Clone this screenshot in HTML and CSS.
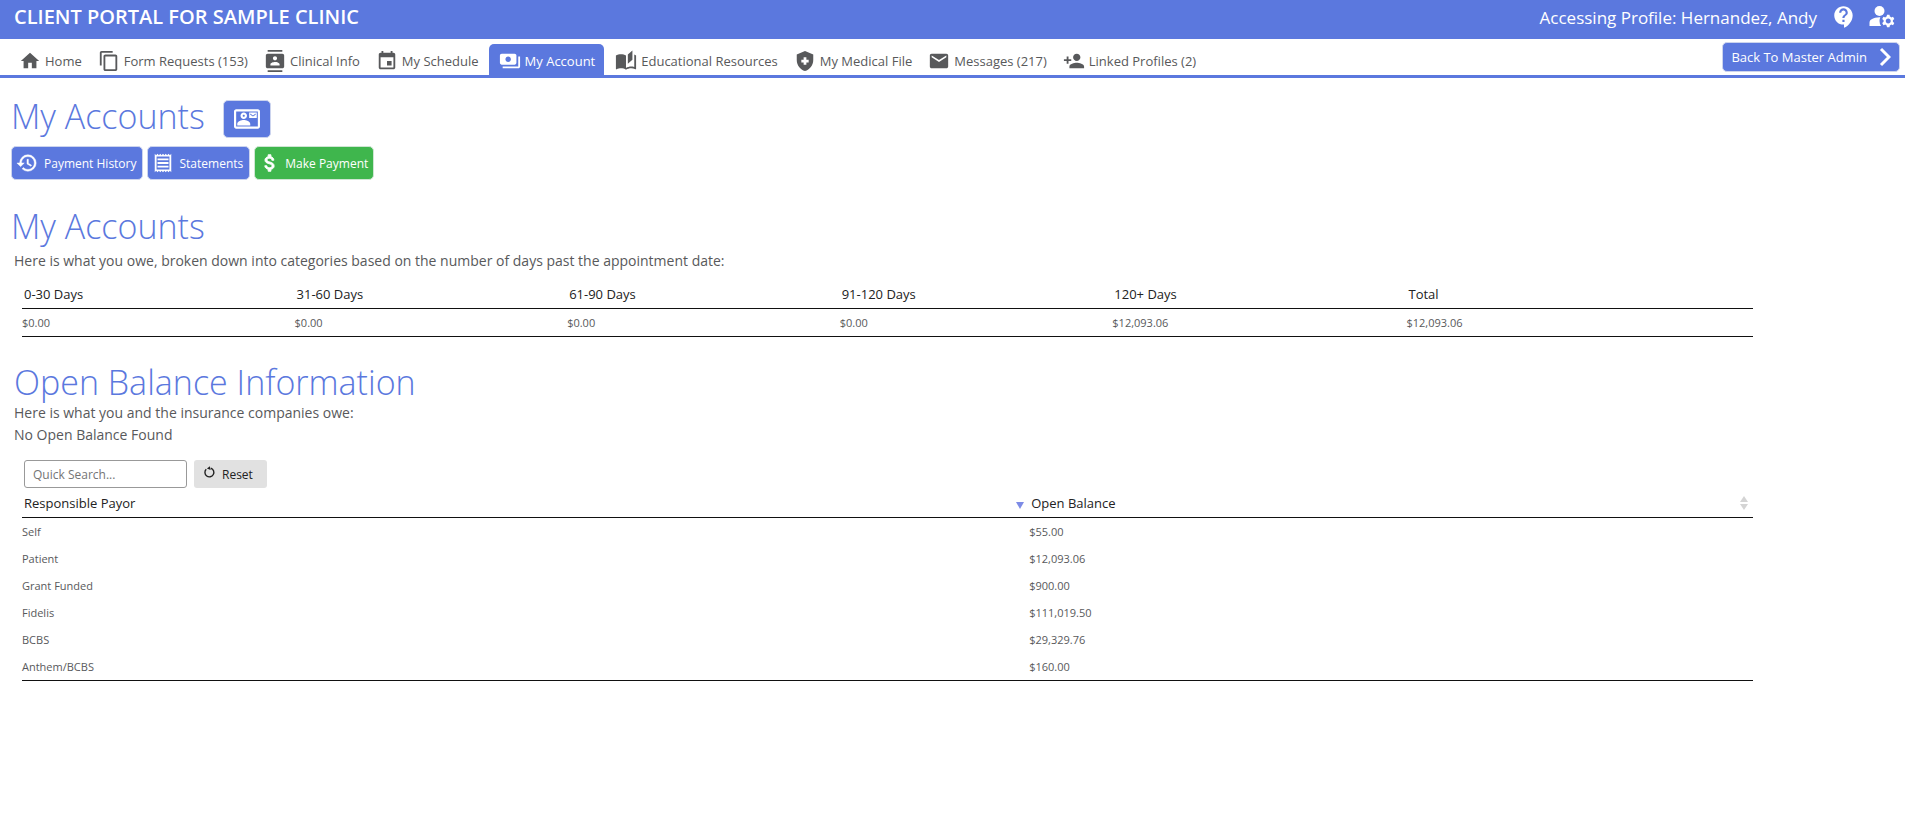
FILE: index.html
```html
<!DOCTYPE html>
<html lang="en">
<head>
<meta charset="utf-8">
<title>Client Portal for Sample Clinic</title>
<link rel="stylesheet" href="styles.css">
</head>
<body>
<header class="topbar">
  <div class="brand">CLIENT PORTAL FOR SAMPLE CLINIC</div>
  <div class="profile">
    <span>Accessing Profile: Hernandez, Andy</span>
    <a href="#help" class="top-icon help" aria-label="Help"><svg viewBox="0 0 24 24"><path d="M11.5 2C6.81 2 3 5.81 3 10.500S6.810 19 11.500 19h.5v3c4.860-2.340 8-7 8-11.500C20 5.810 16.190 2 11.500 2zm1 14.500h-2v-2h2v2zm0-3.500h-2c0-3.250 3-3 3-5 0-1.100-.9-2-2-2s-2 .9-2 2h-2c0-2.210 1.790-4 4-4s4 1.790 4 4c0 2.500-3 2.750-3 5z"/></svg></a>
    <a href="#account" class="top-icon" aria-label="Account settings"><svg viewBox="0 0 24 24"><circle cx="10" cy="8" r="4"/><path d="M10.670 13.020C10.450 13.010 10.230 13 10 13c-2.420 0-4.680.67-6.610 1.820C2.510 15.340 2 16.320 2 17.350V20h9.260A6.960 6.960 0 0 1 10 16c0-1.070.25-2.070.67-2.980zM20.750 16c0-.22-.03-.42-.06-.63l1.140-1.010-1-1.730-1.450.49c-.32-.27-.68-.48-1.080-.63L18 11h-2l-.3 1.490c-.4.150-.76.36-1.080.63l-1.450-.49-1 1.730 1.140 1.010c-.03.210-.06.410-.06.630s.03.420.06.630l-1.140 1.010 1 1.730 1.450-.49c.32.270.68.480 1.080.630L16 21h2l.3-1.490c.4-.15.76-.36 1.080-.63l1.450.49 1-1.730-1.140-1.010c.03-.21.06-.41.060-.63zM17 18c-1.100 0-2-.9-2-2s.9-2 2-2 2 .9 2 2-.9 2-2 2z"/></svg></a>
  </div>
</header>
<nav class="nav">
  <div class="tabs">
    <a class="tab" href="#home"><svg viewBox="0 0 24 24"><path d="M10 20v-6h4v6h5v-8h3L12 3 2 12h3v8z"/></svg>Home</a>
    <a class="tab" href="#forms"><svg viewBox="0 0 24 24"><path d="M16 1H4c-1.100 0-2 .9-2 2v14h2V3h12V1zm3 4H8c-1.100 0-2 .9-2 2v14c0 1.100.9 2 2 2h11c1.100 0 2-.9 2-2V7c0-1.100-.9-2-2-2zm0 16H8V7h11v14z"/></svg>Form Requests (153)</a>
    <a class="tab" href="#clinical"><svg viewBox="0 0 24 24"><path d="M20 0H4v2h16V0zM4 24h16v-2H4v2zM20 4H4c-1.100 0-2 .9-2 2v12c0 1.100.9 2 2 2h16c1.100 0 2-.9 2-2V6c0-1.100-.9-2-2-2zm-8 2.750c1.240 0 2.250 1.010 2.250 2.250s-1.010 2.250-2.250 2.250S9.750 10.240 9.750 9 10.760 6.750 12 6.750zM17 17H7v-1.500c0-1.670 3.330-2.500 5-2.500s5 .83 5 2.500V17z"/></svg>Clinical Info</a>
    <a class="tab" href="#schedule"><svg viewBox="0 0 24 24"><path d="M17 12h-5v5h5v-5zM16 1v2H8V1H6v2H5c-1.110 0-1.990.9-1.990 2L3 19c0 1.100.89 2 2 2h14c1.100 0 2-.9 2-2V5c0-1.100-.9-2-2-2h-1V1h-2zm3 18H5V8h14v11z"/></svg>My Schedule</a>
    <a class="tab active" href="#account" aria-current="page"><svg viewBox="0 0 24 24"><path d="M19 14V6c0-1.100-.9-2-2-2H3c-1.100 0-2 .9-2 2v8c0 1.100.9 2 2 2h14c1.100 0 2-.9 2-2zm-9-1c-1.660 0-3-1.340-3-3s1.340-3 3-3 3 1.340 3 3-1.340 3-3 3zm13-6v11c0 1.100-.9 2-2 2H4v-2h17V7h2z"/></svg>My Account</a>
    <a class="tab education" href="#education"><svg viewBox="0 0 24 24"><path d="M19 .5l-5 4.500v10l5-4.500V.5zM1 6v14.650c0 .25.25.5.5.5.1 0 .15-.05.25-.05C3.100 20.450 5.050 20 6.500 20c1.950 0 4.050.4 5.500 1.500V6c-1.450-1.100-3.550-1.500-5.500-1.500S2.450 4.900 1 6zm22 13.500V6c-.6-.45-1.250-.75-2-1v13.500c-1.100-.35-2.300-.5-3.500-.5-1.700 0-4.150.65-5.500 1.500v2c1.350-.85 3.800-1.500 5.500-1.500 1.650 0 3.350.3 4.750 1.050.1.050.15.050.25.050.25 0 .5-.25.5-.5z"/></svg>Educational Resources</a>
    <a class="tab" href="#file"><svg viewBox="0 0 24 24"><path fill-rule="evenodd" d="M12 1 3 5v6c0 5.550 3.840 10.740 9 12 5.160-1.260 9-6.450 9-12V5zM10.500 8h3v2.500H16v3h-2.500V16h-3v-2.500H8v-3h2.500z"/></svg>My Medical File</a>
    <a class="tab" href="#messages"><svg viewBox="0 0 24 24"><path d="M20 4H4c-1.100 0-1.990.9-1.990 2L2 18c0 1.100.9 2 2 2h16c1.100 0 2-.9 2-2V6c0-1.100-.9-2-2-2zm0 4l-8 5-8-5V6l8 5 8-5v2z"/></svg>Messages (217)</a>
    <a class="tab" href="#linked"><svg viewBox="0 0 24 24"><path d="M15 12c2.210 0 4-1.790 4-4s-1.790-4-4-4-4 1.790-4 4 1.790 4 4 4zm-9-2V7H4v3H1v2h3v3h2v-3h3v-2H6zm9 4c-2.670 0-8 1.340-8 4v2h16v-2c0-2.660-5.330-4-8-4z"/></svg>Linked Profiles (2)</a>
  </div>
  <button type="button" class="btn back">Back To Master Admin<svg viewBox="0 0 12 20"><path d="M2 2l8 8-8 8" fill="none" stroke="currentColor" stroke-width="3"/></svg></button>
</nav>
<main>
  <div class="title-row">
    <h1>My Accounts</h1>
    <button type="button" class="btn card-btn" aria-label="Contact card"><svg viewBox="0 0 24 24"><path fill-rule="evenodd" d="M22 3H2C.9 3 0 3.900 0 5v14c0 1.100.9 2 2 2h20c1.100 0 1.990-.9 1.990-2L24 5c0-1.100-.9-2-2-2zm0 16H2V5h20v14zM21 6h-7v5h7V6zm-1 2l-2.500 1.750L15 8V7l2.500 1.750L20 7v1zM9 12c1.650 0 3-1.350 3-3s-1.350-3-3-3-3 1.350-3 3 1.350 3 3 3zm0-4c.55 0 1 .45 1 1s-.45 1-1 1-1-.45-1-1 .45-1 1-1zm6 8.590c0-2.500-3.970-3.580-6-3.580s-6 1.080-6 3.580V18h12v-1.410z"/></svg></button>
  </div>
  <div class="actions">
    <button type="button" class="btn act"><svg viewBox="0 0 24 24"><path d="M13 3a9 9 0 0 0-9 9H1l3.890 3.890.07.14L9 12H6c0-3.870 3.130-7 7-7s7 3.130 7 7-3.130 7-7 7c-1.930 0-3.680-.79-4.940-2.060l-1.420 1.420A8.950 8.950 0 0 0 13 21a9 9 0 0 0 0-18zm-1 5v5l4.280 2.540.72-1.210-3.500-2.080V8H12z" stroke="currentColor" stroke-width=".5"/></svg>Payment History</button>
    <button type="button" class="btn act statements"><svg viewBox="0 0 24 24"><path d="M19.500 3.500L18 2l-1.500 1.500L15 2l-1.500 1.500L12 2l-1.500 1.500L9 2 7.500 3.500 6 2 4.500 3.500 3 2v20l1.500-1.500L6 22l1.500-1.500L9 22l1.500-1.500L12 22l1.500-1.500L15 22l1.500-1.500L18 22l1.500-1.500L21 22V2l-1.500 1.500zM19 19.090H5V4.910h14v14.180zM6 15h12v2H6zm0-4h12v2H6zm0-4h12v2H6z"/></svg>Statements</button>
    <button type="button" class="btn act pay"><svg viewBox="0 0 24 24"><path d="M11.800 10.900c-2.270-.59-3-1.200-3-2.150 0-1.090 1.010-1.850 2.700-1.850 1.780 0 2.440.85 2.500 2.100h2.210c-.07-1.720-1.120-3.300-3.210-3.810V3h-3v2.160c-1.940.42-3.500 1.680-3.500 3.610 0 2.310 1.910 3.460 4.700 4.130 2.500.6 3 1.480 3 2.410 0 .69-.49 1.790-2.700 1.790-2.060 0-2.870-.92-2.980-2.100h-2.200c.12 2.190 1.760 3.420 3.680 3.830V21h3v-2.150c1.950-.37 3.500-1.500 3.500-3.550 0-2.840-2.430-3.810-4.700-4.400z" stroke="currentColor"/></svg>Make Payment</button>
  </div>
  <section class="owed">
    <h2>My Accounts</h2>
    <p class="note intro">Here is what you owe, broken down into categories based on the number of days past the appointment date:</p>
    <table class="grid aging">
      <thead><tr><th>0-30 Days</th><th>31-60 Days</th><th>61-90 Days</th><th>91-120 Days</th><th class="c5">120+ Days</th><th class="c6">Total</th></tr></thead>
      <tbody><tr><td>$0.00</td><td>$0.00</td><td>$0.00</td><td>$0.00</td><td>$12,093.06</td><td>$12,093.06</td></tr></tbody>
    </table>
  </section>
  <section class="open">
    <h2 class="wide">Open Balance Information</h2>
    <p class="note">Here is what you and the insurance companies owe:</p>
    <p class="note">No Open Balance Found</p>
    <div class="search">
      <input type="text" placeholder="Quick Search..." aria-label="Quick Search">
      <button type="button" class="reset"><svg viewBox="0 0 14 14"><path d="M3.500 3.500a4.800 4.800 0 1 0 5-1.100" fill="none" stroke="currentColor" stroke-width="1.500"/><path d="M4.200 2.600 7.500.2l.7 4z"/></svg>Reset</button>
    </div>
    <table class="grid balances">
      <thead><tr>
        <th><div class="sort">Responsible Payor<svg class="down" viewBox="0 0 8 7"><path d="M0 0h8L4 7z"/></svg></div></th>
        <th><div class="sort">Open Balance<svg class="both" viewBox="0 0 8 14"><path d="M4 0l4 6H0zM0 8h8l-4 6z"/></svg></div></th>
      </tr></thead>
      <tbody>
        <tr><td>Self</td><td>$55.00</td></tr>
        <tr><td>Patient</td><td>$12,093.06</td></tr>
        <tr><td>Grant Funded</td><td>$900.00</td></tr>
        <tr><td>Fidelis</td><td>$111,019.50</td></tr>
        <tr><td>BCBS</td><td>$29,329.76</td></tr>
        <tr><td>Anthem/BCBS</td><td>$160.00</td></tr>
      </tbody>
    </table>
  </section>
</main>
</body>
</html>
```
FILE: styles.css
```css
* { box-sizing: border-box; }
body { margin: 0; background: #fff; color: #58595b; font-family: "Open Sans", "Noto Sans", sans-serif; font-size: 13px; }
a { color: inherit; text-decoration: none; }
button, input { font: inherit; margin: 0; }
svg { fill: currentColor; flex: none; display: block; }
h1, h2, p { margin: 0; }

.topbar { height: 39px; background: #5b78de; color: #fff; display: flex; justify-content: space-between; align-items: flex-start; padding: 0 8px 0 14px; }
.brand { font-size: 20px; line-height: 34px; font-weight: 600; }
.profile { display: flex; align-items: center; font-size: 17px; line-height: 36px; }
.top-icon svg { width: 30px; height: 30px; margin-bottom: 4px; }
.top-icon.help { margin: 0 10px 0 14px; }
.top-icon.help svg { width: 26px; height: 26px; margin-bottom: 2px; }

.nav { display: flex; justify-content: space-between; align-items: flex-start; border-bottom: 3px solid #5b78de; padding: 3px 5px 0 0; height: 39px; }
.tabs { display: flex; padding: 2px 0 0 11px; }
.tab { display: flex; align-items: center; gap: 4px; height: 31px; padding: 2px 8px 0; font-size: 13px; white-space: nowrap; }
.tab svg { width: 22px; height: 22px; }
.tab.active { background: #5b78de; color: #fff; border-radius: 5px 5px 0 0; padding: 2px 9px 0 10px; margin-left: 2px; }
.tab.education { padding-left: 11px; }
.btn { display: flex; align-items: center; background: #5b78de; color: #fff; border: 1px solid #ccd4ee; border-radius: 5px; cursor: pointer; }
.back { height: 30px; padding: 0 8px; gap: 12px; }
.back svg { width: 12px; height: 20px; }

main { padding: 18px 8% 0 11px; }
h1, h2 { color: #5b78de; font-weight: 300; font-size: 34px; line-height: 40px; }
.title-row { display: flex; align-items: flex-start; gap: 18px; }
.card-btn { width: 48px; height: 38px; padding: 0; margin-top: 4px; justify-content: center; }
.card-btn svg { width: 26px; height: 26px; }
.actions { display: flex; gap: 4px; margin-top: 8px; }
.act { height: 34px; padding: 0 5px 0 4px; gap: 6px; font-size: 12px; }
.act svg { width: 22px; height: 22px; }
.statements { padding-right: 6px; }
.pay { background: #3fb64d; border-color: #cfe6d3; gap: 4px; }

.owed { margin-top: 26px; }
.note { padding-left: 3px; font-size: 14px; line-height: 22px; }
.intro { padding-top: 4px; }
.grid { width: calc(100% - 11px); margin-left: 11px; border-collapse: collapse; table-layout: fixed; border-bottom: 1px solid #111; text-align: left; }
.grid th { color: #222; font-size: 13px; font-weight: 400; line-height: 20px; padding: 0 2px 4px; border-bottom: 1px solid #111; }
.grid td { font-size: 11px; line-height: 18px; padding: 5px 0 4px; }
.aging { margin-top: 12px; }
.c5 { width: 17%; }
.c6 { width: 20%; }
.open { margin-top: 25px; }
.wide { padding-left: 3px; }
.search { display: flex; gap: 7px; margin: 14px 0 5px 13px; }
.search input { width: 163px; height: 28px; border: 1px solid #999; border-radius: 3px; padding: 0 8px; font-size: 12px; }
.search input::placeholder { color: #757575; opacity: 1; }
.reset { display: flex; align-items: center; gap: 6px; width: 73px; height: 28px; padding: 0 9px; background: #e1e1e1; border: 0; border-radius: 3px; color: #222; font-size: 12px; }
.reset svg { width: 13px; height: 13px; margin-bottom: 4px; }
.balances th:first-child { width: 58.2%; }
.sort { display: flex; justify-content: space-between; align-items: center; padding-right: 3px; }
.down { width: 8px; height: 7px; margin-top: 4px; color: #7d8be6; }
.both { width: 8px; height: 14px; color: #d4d4d4; }
```
